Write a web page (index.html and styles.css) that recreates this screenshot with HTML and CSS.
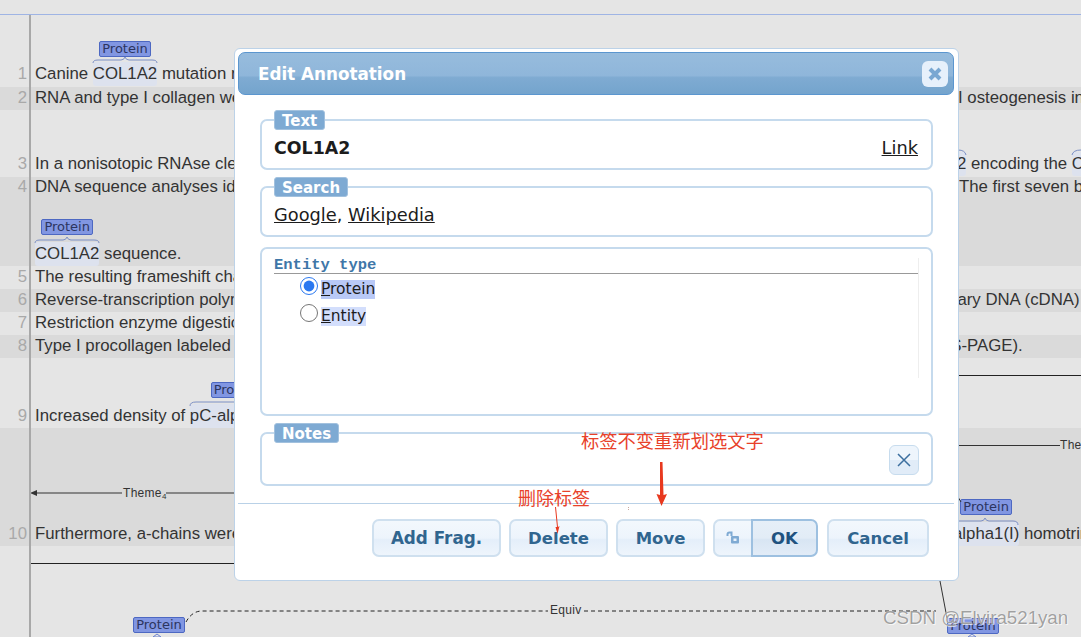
FILE: index.html
```html
<!DOCTYPE html>
<html lang="en">
<head>
<meta charset="utf-8">
<title>Edit Annotation</title>
<link rel="stylesheet" href="styles.css">
</head>
<body>
<div class="page">
  <main class="doc">
    <div class="row light h1 up"><span class="num">1</span><span class="txt">Canine <span class="ann">COL1A2<span class="chip">Protein</span></span> mutation results</span><span class="rt"></span></div>
    <div class="row dark h2"><span class="num">2</span><span class="txt">RNA and type I collagen were</span><span class="rt r2">I osteogenesis in</span></div>
    <div class="row light h3 up"><span class="num">3</span><span class="txt">In a nonisotopic RNAse cleavage</span><span class="rt r3"><span class="ann">COL1A2</span> encoding the <span class="ann">C</span></span></div>
    <div class="row dark h4 up"><span class="num n-top">4</span><div class="lines"><div class="line"><span class="txt">DNA sequence analyses identified</span><span class="rt r4">The first seven b</span></div><div class="line last"><span class="txt"><span class="ann">COL1A2<span class="chip">Protein</span></span> sequence.</span></div></div></div>
    <div class="row light h2"><span class="num">5</span><span class="txt">The resulting frameshift changes</span><span class="rt"></span></div>
    <div class="row dark h2"><span class="num">6</span><span class="txt">Reverse-transcription polymerase</span><span class="rt r6">complementary DNA (cDNA)</span></div>
    <div class="row light h2"><span class="num">7</span><span class="txt">Restriction enzyme digestion</span><span class="rt"></span></div>
    <div class="row dark h2"><span class="num">8</span><span class="txt">Type I procollagen labeled</span><span class="rt r8">SDS-PAGE).</span></div>
    <div class="row light h9"><span class="num">9</span><span class="txt">Increased density of <span class="ann">pC-alpha1(I)<span class="chip">Protein</span></span></span><span class="rt"></span></div>
    <div class="row dark h10"><span class="num">10</span><span class="txt">Furthermore, a-chains were</span><span class="rt r10"><span class="ann">alpha1(I)<span class="chip">Protein</span></span> homotrin</span></div>
  </main>

  <svg class="links" width="1081" height="637" viewBox="0 0 1081 637" aria-hidden="true">
    <g class="brace">
      <path d="M93 63Q93 60 98 60H121Q124 60 125 57Q126 60 129 60H152Q157 60 157 63"/>
      <path d="M35 243Q35 240 40 240H63Q66 240 67 237Q68 240 71 240H94Q99 240 99 243"/>
      <path d="M190 406Q190 402 196 402H236"/>
      <path d="M958 521H981Q984 521 985 518Q986 521 989 521H1013Q1018 521 1018 525"/>
      <path d="M958 150Q965 150 966 155"/>
      <path d="M1072 155Q1073 150 1081 150"/>
    </g>
    <line class="rule" x1="31" y1="563.500" x2="236" y2="563.500"/>
    <line class="rule" x1="955" y1="375.500" x2="1081" y2="375.500"/>
    <path class="rel" d="M36 493H122M166 493H236"/>
    <path class="rel" d="M957 445.500H1060"/>
    <path class="head" d="M30 493L37 490V496Z"/>
    <text class="lab" x="123" y="497">Theme</text>
    <text class="sub" x="162" y="499">4</text>
    <text class="lab" x="1060" y="449">The</text>
    <path class="dash" d="M186 622Q192 611 202 611H548M584 611H936"/>
    <text class="lab" x="550" y="614">Equiv</text>
    <path class="rel" d="M940 581L947 618"/>
    <path class="rel" d="M958 497L961 502"/>
    <path class="tip" d="M157 634L161 637H153Z"/>
    <path class="tip" d="M972 634L976 637H968Z"/>
  </svg>
  <span class="chip free c1">Protein</span>
  <span class="chip free c2">Protein</span>

  <section class="dialog">
    <header class="title"><h1>Edit Annotation</h1>
      <button class="close" type="button" aria-label="Close"><svg width="16" height="16" viewBox="0 0 16 16"><path d="M3 3L13 13M13 3L3 13"/></svg></button>
    </header>
    <div class="body">
      <fieldset class="field first">
        <legend>Text</legend>
        <div class="between"><strong class="sel">COL1A2</strong><a class="lnk" href="#">Link</a></div>
      </fieldset>
      <fieldset class="field">
        <legend>Search</legend>
        <div class="between"><span class="lnks"><a class="lnk" href="#">Google</a>, <a class="lnk" href="#">Wikipedia</a></span></div>
      </fieldset>
      <div class="types">
        <div class="panel">
          <div class="panel-h">Entity type</div>
          <label class="opt"><input type="radio" name="t" checked><span class="on"><u>P</u>rotein</span></label>
          <label class="opt"><input type="radio" name="t"><span class="off"><u>E</u>ntity</span></label>
        </div>
      </div>
      <fieldset class="field notes">
        <legend>Notes</legend>
        <div class="notes-in"><button class="clear" type="button" aria-label="Clear"><svg width="16" height="16" viewBox="0 0 16 16"><path d="M2 2L14 14M14 2L2 14"/></svg></button></div>
      </fieldset>
    </div>
    <footer class="foot">
      <button class="btn w-add" type="button">Add Frag.</button>
      <button class="btn w-del" type="button">Delete</button>
      <button class="btn w-move" type="button">Move</button>
      <div class="pair">
        <button class="btn lock" type="button" aria-label="Lock"><svg width="14" height="14" viewBox="0 0 14 14"><path d="M1.500 5V3.500Q1.500 1.500 3.500 1.500H5.500V5"/><rect x="5" y="5" width="8" height="7.500" rx="1"/><rect class="hole" x="7.500" y="7.500" width="3" height="2.500"/></svg></button>
        <button class="btn ok" type="button">OK</button>
      </div>
      <button class="btn w-cancel" type="button">Cancel</button>
    </footer>
  </section>

  <svg class="marks" width="1081" height="637" viewBox="0 0 1081 637" aria-hidden="true">
    <path d="M660 462H662.500L663.500 495L667 494L661.500 506L656.500 494L660 495Z"/>
    <path d="M555 507L556 507L558 527L559.500 526L557.500 534L555.500 527L557 527Z"/>
    <rect class="speck" x="628" y="507" width="1" height="1"/>
    <rect class="speck" x="628" y="509" width="1" height="1"/>
  </svg>
  <span class="note n1">标签不变重新划选文字</span>
  <span class="note n2">删除标签</span>
  <span class="wm">CSDN @Elvira521yan</span>
</div>
</body>
</html>
```
FILE: styles.css
```css
html, body { margin: 0; padding: 0; background: #fff; }
.page { position: relative; width: 1081px; height: 637px; overflow: hidden; background: #e5e5e5; font-family: "Liberation Sans", Arial, sans-serif; }

.doc { display: flex; flex-direction: column; height: 622px; margin-top: 15px; position: absolute; left: 0; top: 0; width: 1081px; }
.page::before { content: ""; position: absolute; left: 0; right: 0; top: 14px; height: 1px; background: #9fb4e4; }
.page::after { content: ""; position: absolute; left: 29px; top: 15px; bottom: 0; width: 2px; background: #a8a8a8; }

.row { display: grid; grid-template-columns: 30px 1fr 123px; align-items: end; font-size: 16.800px; line-height: 23px; color: #333; white-space: nowrap; flex: none; }
.light { background: #e5e5e5; }
.dark { background: #dadada; }
.h1 { height: 72px; } .h2 { height: 23px; } .h3 { height: 67px; } .h4 { height: 89px; } .h9 { height: 70px; } .h10 { height: 118px; }
.num { text-align: right; padding-right: 2px; color: #a9a9a9; box-sizing: border-box; width: 29px; position: relative; top: -1px; }
.n-top { align-self: start; }
.txt { padding-left: 5px; position: relative; top: -1px; }
.rt { display: block; position: relative; top: -1px; }
.up .num, .up .txt, .up .rt { top: -2px; }
.lines .txt, .lines .rt { top: 0; }
.r3 { text-indent: -56px; }
.r4 { text-indent: 1px; }
.r6 { text-indent: -92px; }
.r8 { text-indent: -31px; }
.r10 { text-indent: -5px; }
.lines { grid-column: 2 / 4; display: flex; flex-direction: column; align-self: start; margin-top: -2px; }
.line { display: grid; grid-template-columns: 1fr 123px; }
.line.last { margin-top: 44px; }

.ann { position: relative; background: #dde2ee; border-radius: 3px; padding: 2px 0 3px; }
.chip { box-sizing: border-box; position: absolute; left: 50%; top: -23px; transform: translateX(-50%); width: 52px; height: 16px; background: #8196e2; border: 1px solid #4d68c2; border-radius: 2px; font: 13px/14px "DejaVu Sans", sans-serif; color: #2c3560; text-align: center; text-indent: 0; }
.h1 .chip { top: -21px; }
.h9 .chip { top: -22px; }
.free { transform: none; }
.c1 { left: 133px; top: 617px; }
.c2 { left: 947px; top: 618px; z-index: 1; }

.links { position: absolute; left: 0; top: 0; }
.brace path { fill: none; stroke: #7b8fc6; stroke-width: 1; }
.rule { stroke: #222; stroke-width: 1; }
.rel { fill: none; stroke: #333; stroke-width: 1; }
.head { fill: #333; }
.tip { fill: #e5e5e5; stroke: #6c82d0; }
.dash { fill: none; stroke: #222; stroke-dasharray: 4 3; }
.lab { font: 12px "Liberation Sans", sans-serif; fill: #333; letter-spacing: .3px; }
.sub { font: 8px "Liberation Sans", sans-serif; fill: #333; }

.dialog { position: absolute; left: 234px; top: 48px; width: 725px; height: 533px; box-sizing: border-box; background: #fff; border: 1px solid #bcd2e8; border-radius: 6px; padding: 3px 4px 0 3px; font-family: "DejaVu Sans", sans-serif; color: #1c1c1c; }
.title { display: flex; align-items: center; justify-content: space-between; height: 43px; box-sizing: border-box; padding: 0 5px 0 19px; border: 1px solid #5b96cf; border-radius: 7px; background: linear-gradient(#97bcdd 0, #8fb6da 55%, #7fabd2 60%, #74a4cd 100%); }
.title h1 { margin: 0; font-size: 16.800px; font-weight: 700; color: #fff; }
.close { display: flex; align-items: center; justify-content: center; width: 26px; height: 26px; padding: 0; border: 0; border-radius: 6px; background: #e6f0fb; }
.close path { fill: none; stroke: #79a7d2; stroke-width: 4; }

.body { padding: 15px 21px 0 22px; display: flex; flex-direction: column; }
.field { box-sizing: border-box; height: 60px; margin: 7px 0 0; padding: 0 12px; min-width: 0; border: 2px solid #c5daed; border-radius: 7px; }
.field.first { margin-top: 0; }
.field legend { box-sizing: border-box; height: 20px; padding: 0 7px; background: #7eaad3; border-radius: 3px; border: 1px solid #a2c1de; font-size: 15px; line-height: 20px; font-weight: 700; color: #fff; }
.between { display: flex; justify-content: space-between; align-items: center; height: 36px; margin-top: -1px; padding-right: 1px; }
.sel { font-size: 17.400px; font-weight: 700; padding-top: 2px; }
.lnk { color: #1c1c1c; text-decoration: underline; }
.between .lnk, .lnks { font-size: 17.800px; }

.types { box-sizing: border-box; height: 169px; margin-top: 10px; padding: 9px 12px 0; border: 2px solid #c5daed; border-radius: 7px; }
.panel { height: 120px; box-sizing: border-box; border-right: 1px solid #eee; }
.panel-h { font: 700 15.500px/14px "Liberation Mono", monospace; color: #3f77a8; border-bottom: 1px solid #999; padding-bottom: 1px; margin-bottom: 3px; }
.opt { display: flex; align-items: flex-start; padding-left: 26px; height: 27px; font-size: 15.500px; line-height: 19px; }
.opt input { width: 18px; height: 18px; margin: 0 3px 0 0; accent-color: #2a78f0; }
.opt span { margin-top: 3px; }
.on { background: #b9c9f7; }
.off { background: #d3defc; }

.notes { height: 63px; }
.notes-in { display: flex; justify-content: flex-end; padding-top: 2px; }
.clear { display: flex; align-items: center; justify-content: center; box-sizing: border-box; width: 30px; height: 30px; padding: 0; border: 1px solid #c7dcee; border-radius: 6px; background: linear-gradient(#eef5fc 50%, #e1ecf8 50%); }
.clear path { fill: none; stroke: #3c6f9f; stroke-width: 1.500; }

.foot { display: flex; justify-content: flex-end; gap: 8px; margin-top: 17px; padding: 15px 25px 0 0; border-top: 1px solid #b9d1e7; }
.btn { box-sizing: border-box; height: 38px; padding: 0; border: 2px solid #cfe0ef; border-radius: 7px; background: linear-gradient(#f3f8fd 0, #edf4fc 50%, #e4eefa 55%, #eef5fc 100%); font: 700 16.500px "DejaVu Sans", sans-serif; color: #30658f; }
.w-add { width: 129px; font-size: 16.800px; }
.w-del { width: 99px; }
.w-move { width: 89px; }
.w-cancel { width: 102px; }
.pair { display: flex; margin-right: 1px; }
.lock { width: 38px; border-radius: 7px 0 0 7px; border-right: 0; display: flex; align-items: center; justify-content: center; }
.lock path { fill: none; stroke: #7faad3; stroke-width: 2; }
.lock rect { fill: #7faad3; }
.lock .hole { fill: #eaf2fb; }
.ok { width: 67px; border: 2px solid #9dc0e0; border-radius: 0 7px 7px 0; background: linear-gradient(#e6eff8 0, #e2ecf6 50%, #d8e5f3 55%, #e2ecf7 100%); color: #20527f; }

.marks { position: absolute; left: 0; top: 0; pointer-events: none; }
.marks path { fill: #e8391f; }
.speck { fill: #c9a9a0; }
.note { position: absolute; color: #e8412a; font-family: "Noto Sans CJK SC", sans-serif; line-height: 1; white-space: nowrap; }
.n1 { left: 581px; top: 431px; font-size: 18.300px; }
.n2 { left: 518px; top: 488px; font-size: 18px; }
.wm { position: absolute; left: 883px; top: 607px; font-size: 18.700px; line-height: 22px; white-space: nowrap; z-index: 2; color: rgba(130,130,130,.75); text-shadow: 0 0 1px #fff, 1px 1px 0 rgba(255,255,255,.7); }
```
